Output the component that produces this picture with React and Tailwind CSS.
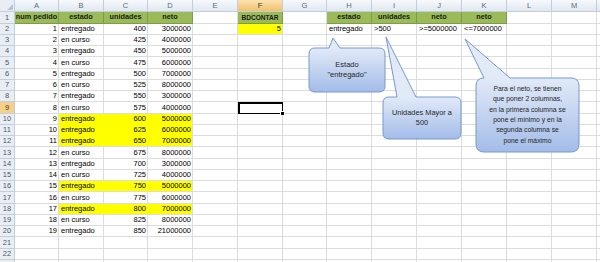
const COLS = ["A", "B", "C", "D", "E", "F", "G", "H", "I", "J", "K", "L", "M", "N"];
const WIDTHS = [
  "w-[44px]",
  "w-[45px]",
  "w-[44px]",
  "w-[45px]",
  "w-[45px]",
  "w-[45px]",
  "w-[44px]",
  "w-[45px]",
  "w-[45px]",
  "w-[45px]",
  "w-[45px]",
  "w-[45px]",
  "w-[45px]",
  "w-[45px]",
];

// pedido, estado, unidades, neto
const DATA = [
  [1, "entregado", 400, 3000000],
  [2, "en curso", 425, 4000000],
  [3, "entregado", 450, 5000000],
  [4, "en curso", 475, 6000000],
  [5, "entregado", 500, 7000000],
  [6, "en curso", 525, 8000000],
  [7, "entregado", 550, 3000000],
  [8, "en curso", 575, 4000000],
  [9, "entregado", 600, 5000000],
  [10, "entregado", 625, 6000000],
  [11, "entregado", 650, 7000000],
  [12, "en curso", 675, 8000000],
  [13, "entregado", 700, 3000000],
  [14, "en curso", 725, 4000000],
  [15, "entregado", 750, 5000000],
  [16, "en curso", 775, 6000000],
  [17, "entregado", 800, 7000000],
  [18, "en curso", 825, 8000000],
  [19, "entregado", 850, 21000000],
];

const YELLOW_ROWS = [10, 11, 12, 16, 18];
const HEADERS = { 0: "num pedido", 1: "estado", 2: "unidades", 3: "neto", 5: "BDCONTAR", 7: "estado", 8: "unidades", 9: "neto", 10: "neto" };
const CRITERIA = { 7: "entregado", 8: ">500", 9: ">=5000000", 10: "<=7000000" };

function getCell(row, col) {
  if (row === 1) {
    if (HEADERS[col]) return { text: HEADERS[col], kind: "green" };
    return null;
  }
  if (row === 2) {
    if (col === 5) return { text: "5", kind: "yellow", right: true };
    if (CRITERIA[col]) return { text: CRITERIA[col] };
  }
  const d = DATA[row - 2];
  if (!d || col > 3) return null;
  const yellow = YELLOW_ROWS.includes(row) && col > 0;
  const right = col !== 1;
  return { text: String(d[col]), right, kind: yellow ? "yellow" : null };
}

function Cell({ row, col }) {
  const cell = getCell(row, col);
  const selected = row === 9 && col === 5;
  let cls = "border-[#dadcdd]";
  if (cell?.kind === "green") cls = "bg-[#9bbb59] border-[#7f9a4d] font-bold justify-center text-[7.3px] text-[#1a1a1a]";
  if (cell?.kind === "yellow") {
    const nextYellow = YELLOW_ROWS.includes(row + 1);
    cls = `bg-[#ffff00] ${col === 3 || col === 5 ? "border-r-[#dadcdd]" : "border-r-[#ffff00]"} ${
      nextYellow ? "border-b-[#ffff00]" : "border-b-[#dadcdd]"
    }`;
  }
  if (cell?.right) cls += " justify-end pr-[1px]";
  else if (cell && cell.kind !== "green") cls += " pl-[2px]";
  if (selected) cls = "border-2 border-black relative";
  return (
    <div className={`${WIDTHS[col]} shrink-0 h-full flex items-center border-r border-b whitespace-nowrap ${cls}`}>
      {cell && (
        <span className={col === 5 && row === 1 ? "text-[6.6px]" : ""}>{cell.text}</span>
      )}
      {selected && <div className="absolute -right-[3px] -bottom-[3px] w-[5px] h-[5px] bg-black border border-white" />}
    </div>
  );
}

function Callouts() {
  return (
    <>
      <svg className="absolute left-0 top-0" width="600" height="262" viewBox="0 0 600 262">
        <defs>
          <linearGradient id="g1" gradientUnits="userSpaceOnUse" x1="0" y1="48" x2="0" y2="92">
            <stop offset="0" stopColor="#e2eaf8" />
            <stop offset="1" stopColor="#a3bce8" />
          </linearGradient>
          <linearGradient id="g2" gradientUnits="userSpaceOnUse" x1="0" y1="97" x2="0" y2="139">
            <stop offset="0" stopColor="#e2eaf8" />
            <stop offset="1" stopColor="#a3bce8" />
          </linearGradient>
          <linearGradient id="g3" gradientUnits="userSpaceOnUse" x1="0" y1="78" x2="0" y2="152">
            <stop offset="0" stopColor="#e2eaf8" />
            <stop offset="1" stopColor="#a3bce8" />
          </linearGradient>
        </defs>
        <g stroke="#7897cf" strokeWidth="1">
          <path
            fill="url(#g1)"
            d="M315 48 L329 48 L333 38 L340 48 L379 48 Q385 48 385 54 L385 86 Q385 92 379 92 L315 92 Q309 92 309 86 L309 54 Q309 48 315 48 Z"
          />
          <path
            fill="url(#g2)"
            d="M389 97 L397 97 L386 37 L416 97 L455 97 Q461 97 461 103 L461 133 Q461 139 455 139 L389 139 Q383 139 383 133 L383 103 Q383 97 389 97 Z"
          />
          <path
            fill="url(#g3)"
            d="M484 78 L465 39 L510 78 L571 78 Q579 78 579 86 L579 144 Q579 152 571 152 L484 152 Q476 152 476 144 L476 86 Q476 78 484 78 Z"
          />
        </g>
      </svg>
      <div className="absolute left-[309px] top-[48px] w-[76px] h-[44px] flex flex-col items-center justify-center text-[7.5px] leading-[10px] text-[#262626]">
        <span>Estado</span>
        <span>"entregado"</span>
      </div>
      <div className="absolute left-[383px] top-[97px] w-[78px] h-[42px] flex flex-col items-center justify-center text-[7.4px] leading-[10px] text-[#262626]">
        <span>Unidades Mayor a</span>
        <span>500</span>
      </div>
      <div className="absolute left-[476px] top-[78px] w-[103px] h-[74px] flex flex-col items-center justify-center text-[6.8px] leading-[10.4px] text-[#262626]">
        <span>Para el neto, se tienen</span>
        <span>que poner 2 columnas,</span>
        <span>en la primera columna se</span>
        <span>pone el  mínimo y en la</span>
        <span>segunda columna se</span>
        <span>pone el máximo</span>
      </div>
    </>
  );
}

export default function App() {
  const rows = Array.from({ length: 23 }, (_, i) => i + 1);
  return (
    <div className="relative w-[600px] h-[262px] overflow-hidden bg-white font-['Liberation_Sans',Arial,sans-serif] text-[7.5px] text-black">
      <div className="flex h-[12px]">
        <div className="w-[15px] shrink-0 h-full border-r border-b border-[#c3cedc] bg-[#e9eef5] flex items-end justify-end p-[1px]">
          <svg width="6" height="6" viewBox="0 0 6 6">
            <path d="M6 0 L6 6 L0 6 Z" fill="#b7c3d3" />
          </svg>
        </div>
        {COLS.map((c, i) => (
          <div
            key={c}
            className={`${WIDTHS[i]} shrink-0 h-full flex items-center justify-center border-r border-b border-[#c3cedc] ${
              c === "F"
                ? "bg-gradient-to-b from-[#fbe3b0] to-[#f2c068] text-[#3b3b3b]"
                : "bg-gradient-to-b from-[#f7f9fc] to-[#e1e8f1] text-[#5d6b80]"
            }`}
          >
            {c === "N" ? "" : c}
          </div>
        ))}
      </div>
      {rows.map((r) => (
        <div key={r} className={`flex ${r % 4 === 1 ? "h-[12px]" : "h-[11px]"}`}>
          <div
            className={`w-[15px] shrink-0 h-full flex items-center justify-center border-r border-b border-[#c3cedc] ${
              r === 9 ? "bg-[#f6cf88] text-[#3b3b3b]" : "bg-[#e9eef5] text-[#4b586c]"
            }`}
          >
            {r < 23 ? r : ""}
          </div>
          {COLS.map((c, i) => (
            <Cell key={c} row={r} col={i} />
          ))}
        </div>
      ))}
      <Callouts />
    </div>
  );
}
